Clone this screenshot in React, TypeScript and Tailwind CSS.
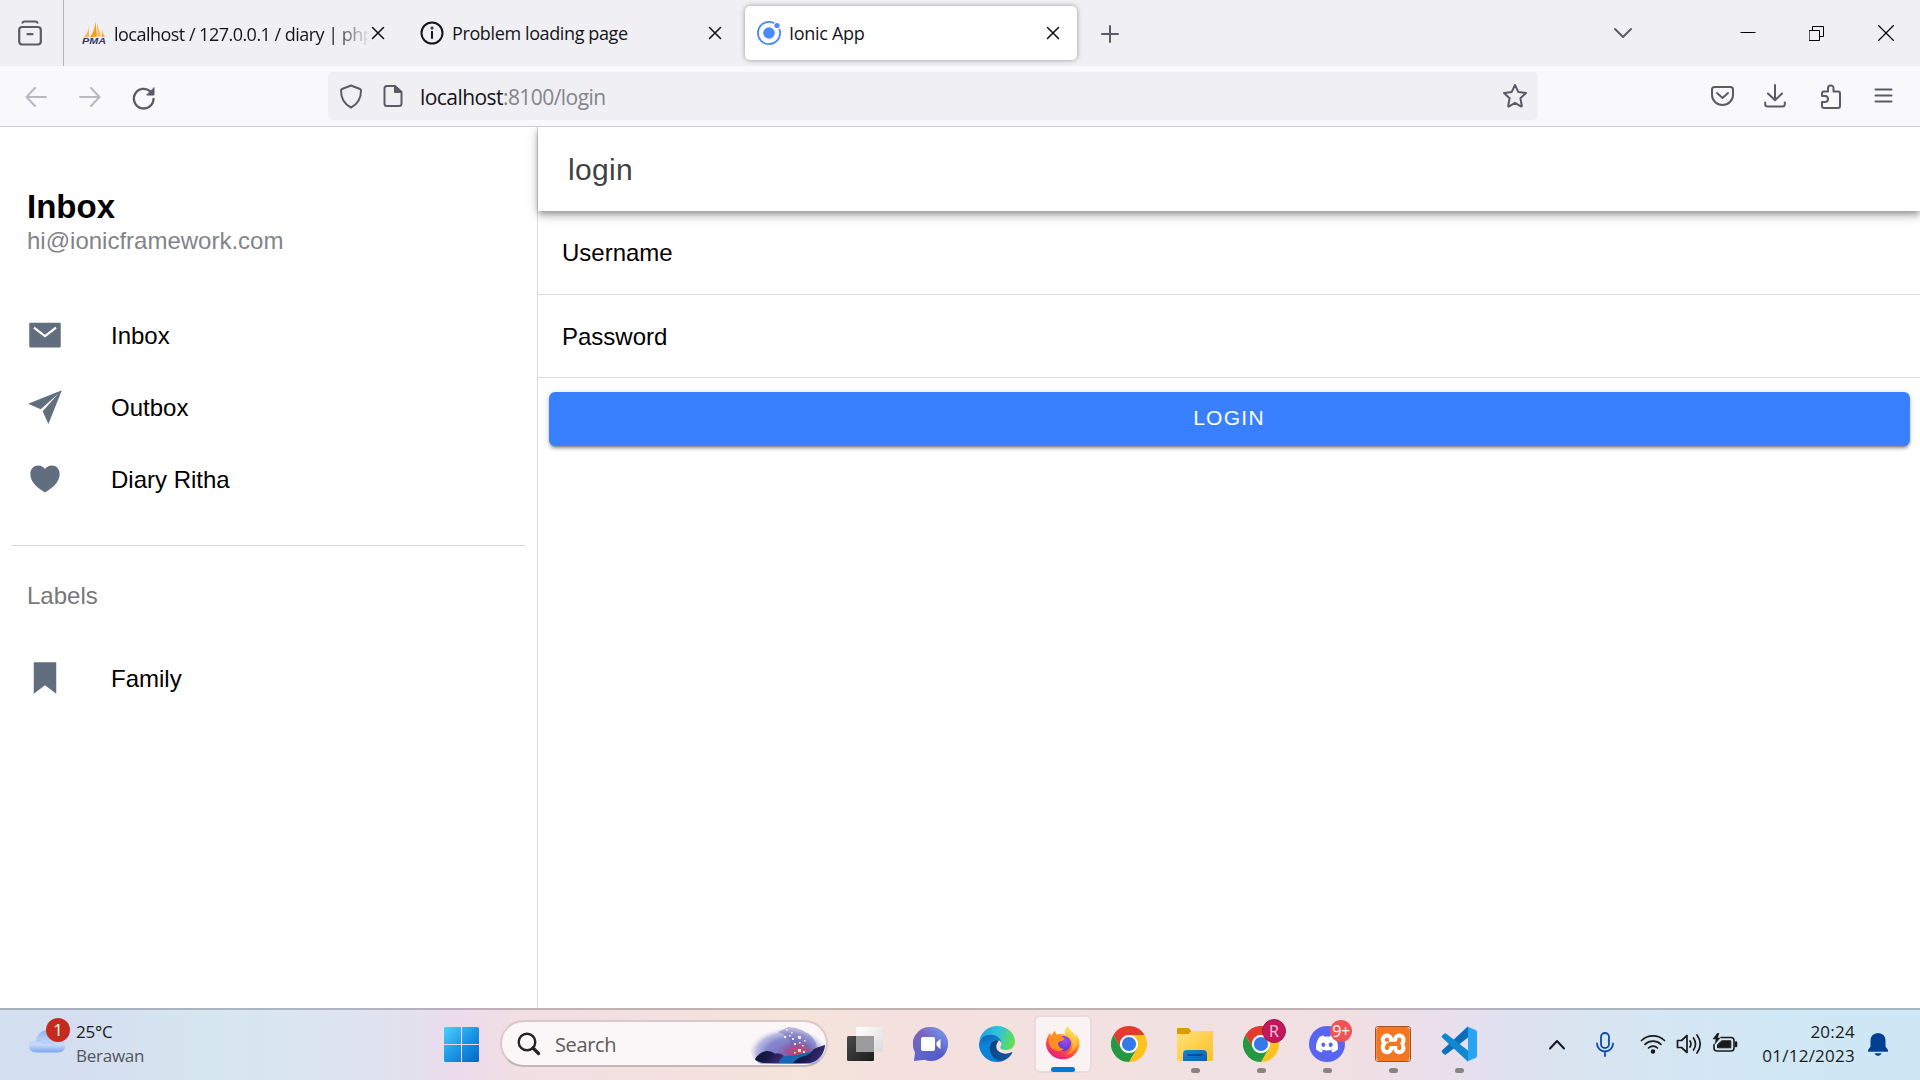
import React from "react";
import { IoMailSharp, IoPaperPlaneSharp, IoHeartSharp, IoBookmarkSharp } from "react-icons/io5";
import { FaDiscord } from "react-icons/fa";
import { SiXampp } from "react-icons/si";

const SEGOE = "font-['Open_Sans','Noto_Sans',sans-serif]";
const ARIAL = "font-['Liberation_Sans',Arial,sans-serif]";

type IconProps = { w: number; h: number; className?: string; children: React.ReactNode; stroke?: string; sw?: number };

function Icon({ w, h, className = "", children, stroke = "#5b5b66", sw = 2 }: IconProps) {
  return (
    <svg
      width={w}
      height={h}
      viewBox={`0 0 ${w} ${h}`}
      fill="none"
      stroke={stroke}
      strokeWidth={sw}
      strokeLinecap="round"
      strokeLinejoin="round"
      className={`shrink-0 ${className}`}
    >
      {children}
    </svg>
  );
}

function TabClose({ className = "" }: { className?: string }) {
  return (
    <Icon w={14} h={14} stroke="#15141a" sw={1.6} className={className}>
      <path d="M1.5 1.5l11 11M12.5 1.5l-11 11" />
    </Icon>
  );
}

function PmaIcon() {
  return (
    <svg width="24" height="24" viewBox="0 0 24 24" className="shrink-0">
      <path d="M7 3.5Q7 11 1.5 16.5L7 16z" fill="#fbb65c" />
      <path d="M13.5 0Q13 10 8 16.5L15 15.5z" fill="#f89c0e" />
      <path d="M15 2Q17.5 10 19 15.5L15.7 16z" fill="#fdb45c" />
      <path d="M20 6.5Q20 12 23 15.5L19.8 16z" fill="#f7a63a" />
      <text x="0" y="23.4" fontSize="9" fontWeight="700" fontStyle="italic" textLength="24" lengthAdjust="spacingAndGlyphs" fill="#37375f" fontFamily="Liberation Sans, sans-serif">PMA</text>
    </svg>
  );
}

function TabStrip() {
  return (
    <div className="flex h-[66px] items-start bg-[#f0f0f4]">
      <div className="flex h-[66px] w-16 items-center border-r border-[#b4b3bb] pl-[18px]">
        <Icon w={24} h={26} sw={2.2}>
          <path d="M4.5 2.7q.5-1.2 2-1.2h11q1.500 0 2 1.200" />
          <rect x="1.200" y="7" width="21.600" height="17.500" rx="3" />
          <path d="M9.500 14.200h5" />
        </Icon>
      </div>
      <div className="flex h-[66px] w-[338px] items-center pl-[18px]">
        <PmaIcon />
        <div className="ml-[8px] w-[257px] pt-[2px] text-[18px] tracking-[-0.52px] whitespace-nowrap text-[#15141a] [mask-image:linear-gradient(to_right,black_219px,transparent_256px)]">
          localhost / 127.0.0.1 / diary | php
        </div>
        <TabClose />
      </div>
      <div className="flex h-[66px] w-[343px] items-center pl-[18px]">
        <Icon w={24} h={24} stroke="#15141a" sw={2}>
          <circle cx="12" cy="12" r="10.500" />
          <path d="M12 10.800v6.200" />
          <circle cx="12" cy="7" r=".5" />
        </Icon>
        <div className="ml-2 w-[255px] pt-px text-[18px] tracking-[-0.38px] whitespace-nowrap text-[#15141a]">Problem loading page</div>
        <TabClose className="ml-px" />
      </div>
      <div className="mt-[6px] flex h-[54px] w-[332px] items-center rounded-[5px] bg-white pl-3 shadow-[0_0_5px_rgba(0,0,0,0.38)]">
        <svg width="24" height="24" viewBox="0 0 24 24" className="shrink-0">
          <circle cx="12" cy="12" r="11.100" fill="none" stroke="#4a8bfc" strokeWidth="1.800" />
          <circle cx="12" cy="12" r="5.800" fill="#4a8bfc" />
          <circle cx="20.200" cy="4.500" r="3.800" fill="#fff" />
          <circle cx="20" cy="4.500" r="2.600" fill="#4a8bfc" />
        </svg>
        <div className="ml-2 w-[256px] pt-px text-[18px] tracking-[-0.3px] text-[#15141a]">Ionic App</div>
        <TabClose className="ml-px" />
      </div>
      <div className="flex h-[66px] flex-1 items-center pl-[24px]">
        <Icon w={18} h={18} className="mt-[2px]"><path d="M9 1v16M1 9h16" /></Icon>
        <Icon w={20} h={12} className="ml-[494px]"><path d="M2 2l8 8 8-8" /></Icon>
        <Icon w={16} h={16} stroke="#000" sw={1} className="ml-[107px]"><path d="M.5 7.500h15" strokeLinecap="butt" /></Icon>
        <Icon w={15} h={15} stroke="#000" sw={1} className="ml-[53px]">
          <path d="M.5 4.500h10v10H.5zM3.500 4V.5h11v10H11" strokeLinejoin="miter" />
        </Icon>
        <Icon w={16} h={16} stroke="#000" sw={1.200} className="ml-[54px]"><path d="M.5.5l15 15M15.500.5l-15 15" /></Icon>
      </div>
    </div>
  );
}

function NavBar() {
  return (
    <div className="flex h-[61px] items-center border-b border-[#cccccf] bg-[#f9f9fb]">
      <Icon w={22} h={20} stroke="#b9b9c0" className="mt-[2px] ml-[25px]"><path d="M21 10H1.500M10 1L1.500 10l8.500 9" /></Icon>
      <Icon w={22} h={20} stroke="#b9b9c0" className="mt-[2px] ml-8"><path d="M1 10h19.500M12 1l8.500 9-8.500 9" /></Icon>
      <Icon w={24} h={24} className="mt-[3px] ml-[31px]" sw={2.300}>
        <path d="M21.500 13a9.800 9.800 0 1 1-3.200-7.600l2 1.800" />
        <path d="M22 2v7h-7z" fill="#5b5b66" strokeWidth="1" />
      </Icon>
      <div className="ml-[172px] flex h-12 w-[1210px] items-center rounded-[5px] bg-[#f0f0f4]">
        <Icon w={22} h={25} className="ml-[12px]"><path d="M11 1.500L20 5q1 .4 1 1.500c0 8-3.500 13.800-10 17C4.500 20.300 1 14.500 1 6.500Q1 5.400 2 5z" /></Icon>
        <Icon w={20} h={22} className="ml-[21px]">
          <path d="M3.500 1H12l6.500 6v11.500q0 2.500-2.500 2.500H4q-2.500 0-2.500-2.500V3.500Q1.500 1 4 1z" />
          <path d="M11.500 1v6.500h7z" fill="#5b5b66" strokeWidth="1" />
        </Icon>
        <div className="ml-[17px] w-[1064px] pt-[4px] text-[21px] tracking-[-0.56px] text-[#15141a]">
          localhost<span className="text-[#84848c]">:8100/login</span>
        </div>
        <Icon w={26} h={26} className="ml-[18px]">
          <path d="M13 2l3.300 6.900 7.700 1-5.600 5.300 1.400 7.500q.1 1-.9.600L13 19.800l-5.900 3.500q-1 .4-.9-.6l1.400-7.500L2 9.900l7.700-1z" />
        </Icon>
      </div>
      <Icon w={23} h={20} className="ml-[173px]">
        <path d="M3.500 1h16q2.500 0 2.500 2.500V9a10.500 10 0 0 1-21 0V3.500Q1 1 3.500 1z" />
        <path d="M6 7l5.500 5L17 7" />
      </Icon>
      <Icon w={22} h={24} className="ml-[30px]"><path d="M11 1v15M4 9.500l7 6.800 7-6.800M1.200 18.500V20q0 2.500 2.500 2.500h14.600q2.500 0 2.500-2.500v-1.500" /></Icon>
      <Icon w={22} h={25} className="ml-[34px]">
        <path d="M2 12V9.500Q2 7.500 4 7.500h4V4q0-2.500 2.800-2.500T13.500 4v3.500H18q2 0 2 2V22q0 2-2 2H4q-2 0-2-2v-4h3q3 0 3-3t-3-3z" />
      </Icon>
      <Icon w={19} h={18} className="ml-[32px]"><path d="M1.500 2.500h16M1.500 8.500h16M1.500 14.500h16" /></Icon>
    </div>
  );
}

function MenuItem({ icon, label }: { icon: React.ReactNode; label: string }) {
  return (
    <div className="flex h-[72px] items-center pl-[27px] text-2xl text-black">
      <span className="text-[36px] text-[#616e7e]">{icon}</span>
      <span className="ml-12 pt-[2px] leading-8">{label}</span>
    </div>
  );
}

function Sidebar() {
  return (
    <aside className="w-[538px] shrink-0 border-r border-[#dcdcdc]">
      <div className="pt-[60px] pl-[27px]">
        <h1 className="text-[33px] leading-[40px] font-bold text-black">Inbox</h1>
        <p className="text-2xl leading-[28px] text-[#838489]">hi@ionicframework.com</p>
      </div>
      <div className="pt-[44px]">
        <MenuItem icon={<IoMailSharp />} label="Inbox" />
        <MenuItem icon={<IoPaperPlaneSharp />} label="Outbox" />
        <MenuItem icon={<IoHeartSharp />} label="Diary Ritha" />
      </div>
      <div className="mx-3 mt-[30px] border-t border-[#d8d8d8]" />
      <div className="pt-[34px] pl-[27px] text-2xl leading-8 text-[#777777]">Labels</div>
      <div className="pt-[30px]">
        <MenuItem icon={<IoBookmarkSharp />} label="Family" />
      </div>
    </aside>
  );
}

function LoginPage() {
  return (
    <main className="flex-1">
      <header className="relative flex h-[84px] items-center bg-white pl-[30px] text-[30px] tracking-[0.3px] text-[#424242] shadow-[0_3px_6px_-1px_rgba(0,0,0,0.3),0_6px_8px_0_rgba(0,0,0,0.14),0_1px_15px_0_rgba(0,0,0,0.12)]">
        login
      </header>
      <div className="flex h-[84px] items-center border-b border-[#dbdbdb] pl-6 text-2xl text-black">Username</div>
      <div className="flex h-[83px] items-center border-b border-[#dbdbdb] pt-[2px] pl-6 text-2xl text-black">Password</div>
      <button className="mt-[14px] ml-[11px] flex h-[54px] w-[1361px] items-center justify-center rounded-[6px] bg-[#3880ff] pr-px pb-[2px] text-[21px] tracking-[1.260px] text-white shadow-[0_4px_2px_-3px_rgba(0,0,0,0.3),0_3px_3px_0_rgba(0,0,0,0.2),0_1px_7px_0_rgba(0,0,0,0.14)]">
        LOGIN
      </button>
    </main>
  );
}

function WindowsLogo() {
  return (
    <svg width="36" height="36" viewBox="0 0 36 36" className="shrink-0">
      <defs>
        <linearGradient id="win" x1="0" y1="0" x2="1" y2="1" gradientUnits="objectBoundingBox">
          <stop offset="0" stopColor="#4dd2ff" />
          <stop offset=".5" stopColor="#1b97e6" />
          <stop offset="1" stopColor="#0067c8" />
        </linearGradient>
      </defs>
      <path d="M1.500 0H17v17H0V1.500Q0 0 1.500 0zM18 0h15.500Q35 0 35 1.500V17H18zM0 18h17v17H1.500Q0 35 0 33.500zM18 18h17v15.500q0 1.500-1.500 1.500H18z" fill="url(#win)" />
    </svg>
  );
}

function SearchArt() {
  return (
    <svg width="76" height="40" viewBox="0 0 76 40" className="shrink-0">
      <defs>
        <radialGradient id="sky" cx=".5" cy=".6" r=".52">
          <stop offset="0" stopColor="#8067b8" />
          <stop offset=".55" stopColor="#8488cf" />
          <stop offset=".8" stopColor="#a9abdc" stopOpacity=".8" />
          <stop offset="1" stopColor="#e5dff0" stopOpacity="0" />
        </radialGradient>
        <radialGradient id="glow">
          <stop offset="0" stopColor="#d3405a" />
          <stop offset=".5" stopColor="#a84c85" stopOpacity=".8" />
          <stop offset="1" stopColor="#7a62b4" stopOpacity="0" />
        </radialGradient>
        <linearGradient id="hill" x1="0" x2="1" y1="0" y2=".3">
          <stop offset="0" stopColor="#0b0f2b" />
          <stop offset=".6" stopColor="#1d1b52" />
          <stop offset="1" stopColor="#3a2c70" />
        </linearGradient>
      </defs>
      <ellipse cx="38" cy="24" rx="38" ry="24" fill="url(#sky)" />
      <path d="M28 8q12 3 13 14l3 10h22q3-10-3-18Q54 4 38 3z" fill="#565bb0" opacity=".4" />
      <ellipse cx="48" cy="29" rx="20" ry="14" fill="url(#glow)" />
      <path d="M5 36q6-7 14-8 8 1 13 4l14-1 14-3q7-5 15-7-1 9-7 14-4 4-12 4H14q-5 0-9-3z" fill="#1668b3" />
      <path d="M5 35q4-7 12-8 5 0 8 3 5-2 9 2-5 4-5 7H14q-6-1-9-4z" fill="url(#hill)" />
      <path d="M43 39q5-6 12-7 6-2 9-7 5-2 11-4-1 9-7 14-4 4-12 4z" fill="url(#hill)" />
      <g fill="#ffe5c0">
        <path d="M26 6h1.600v1.600H26zM31 4h1.600v1.600H31zM36 5h1.600v1.600H36zM34 12h2v2h-2zM41 8h1.600v1.600H41zM42 14h2v2h-2zM48 12h3v3h-3zM44 19h2v2h-2zM49 18h1.600v1.600H49zM54 16h1.600v1.600H54zM52 21h1.600v1.600H52zM48 25h3v3h-3zM53 27h2v2h-2zM44 28h1.600v1.600H44zM39 11h1.600v1.600H39z" />
      </g>
    </svg>
  );
}

function ChromeLogo() {
  return (
    <svg width="36" height="36" viewBox="0 0 36 36" className="shrink-0">
      <path d="M2.400 9A18 18 0 0 1 33.600 9H18a9 9 0 0 0-7.800 13.500z" fill="#e33b2e" />
      <path d="M33.600 9A18 18 0 0 1 18 36l7.800-13.500A9 9 0 0 0 18 9z" fill="#fcc31e" />
      <path d="M2.400 9l7.800 13.500a9 9 0 0 0 15.600 0L18 36A18 18 0 0 1 2.400 9z" fill="#259843" />
      <circle cx="18" cy="18" r="9" fill="#fff" />
      <circle cx="18" cy="18" r="7.100" fill="#3479ea" />
    </svg>
  );
}

function TaskViewIcon() {
  return (
    <svg width="36" height="36" viewBox="0 0 36 36" className="shrink-0">
      <defs>
        <linearGradient id="tv1" x1="0" y1="0" x2="1" y2="1"><stop stopColor="#4b4b4b" /><stop offset="1" stopColor="#1c1c1c" /></linearGradient>
        <linearGradient id="tv2" x1="0" y1="0" x2="1" y2="1"><stop stopColor="#fff" /><stop offset="1" stopColor="#dadada" /></linearGradient>
      </defs>
      <rect x="9" y="1" width="27" height="25" rx="1.500" fill="url(#tv2)" />
      <rect x="0" y="10" width="27" height="25" rx="1.500" fill="url(#tv1)" />
      <path d="M9 10h18v16H9z" fill="#9b9b9b" />
    </svg>
  );
}

function ChatIcon() {
  return (
    <svg width="36" height="36" viewBox="0 0 36 36" className="shrink-0">
      <defs>
        <linearGradient id="chat" x1="0" y1="0" x2=".8" y2="1"><stop stopColor="#8b5fae" /><stop offset=".5" stopColor="#6367c7" /><stop offset="1" stopColor="#5059c9" /></linearGradient>
        <linearGradient id="chat2" x1="0" y1="1" x2="1" y2="0"><stop offset=".5" stopColor="#7b9bf0" stopOpacity="0" /><stop offset="1" stopColor="#7fa2f5" /></linearGradient>
      </defs>
      <path d="M18 1a17 17 0 1 1-6.500 32.700L1 35l1-8.800A17 17 0 0 1 18 1z" fill="url(#chat)" />
      <path d="M18 1a17 17 0 1 1-6.500 32.700L1 35l1-8.800A17 17 0 0 1 18 1z" fill="url(#chat2)" />
      <rect x="8" y="11" width="14" height="14" rx="2" fill="#fff" />
      <path d="M23.500 16.500l4-3.800v10.600l-4-3.800z" fill="#fff" />
    </svg>
  );
}

function EdgeLogo() {
  return (
    <svg width="36" height="36" viewBox="0 0 36 36" className="shrink-0">
      <defs>
        <linearGradient id="eg1" x1="0" y1=".3" x2="1" y2=".5"><stop stopColor="#1d9fe0" /><stop offset=".5" stopColor="#30c2dc" /><stop offset="1" stopColor="#62e04c" /></linearGradient>
        <linearGradient id="eg2" x1=".2" y1="0" x2=".5" y2="1"><stop stopColor="#1464ae" /><stop offset=".4" stopColor="#0a84dc" /><stop offset="1" stopColor="#0c80d8" /></linearGradient>
        <linearGradient id="eg3" x1="0" y1="0" x2="1" y2="1"><stop stopColor="#0d3f80" /><stop offset="1" stopColor="#1159a8" /></linearGradient>
      </defs>
      <path d="M.2 16A18 18 0 0 1 18 0c10 0 18 7 18 15.500 0 5.500-4 8.500-8.500 8.500-4 0-6.300-1.300-6.300-2.600 0-1 1.300-1.500 1.300-4C22.500 13 18 9.500 12.500 9.500 6 9.500 1.500 12.500.2 16z" fill="url(#eg1)" />
      <path d="M0 18C1 12 6 8.800 12 8.800c6 0 10.300 3.700 10.500 8.200-1-2-3-3.200-5.500-3-4 .5-6 4.500-5.500 9 .6 6 5 10.500 10.500 12.500-2 .4-3 .5-4 .5A18 18 0 0 1 0 18z" fill="url(#eg2)" />
      <path d="M17 14c-3.500.6-6.500 4-6.200 9C11.200 30 17 35 22.500 35.400c5-1.400 9-4.700 11-8.900q-.2-.8-1-.3c-3 1.500-6.500 1.900-9.500.8-4-1.300-6-4-5.700-7 .1-2.300 1.700-4 2.500-5.300Q18.500 13.800 17 14z" fill="url(#eg3)" />
    </svg>
  );
}

function FirefoxLogo() {
  return (
    <svg width="36" height="36" viewBox="0 0 36 36" className="shrink-0">
      <defs>
        <linearGradient id="ff1" x1=".8" y1="0" x2=".25" y2="1"><stop stopColor="#fff44f" /><stop offset=".35" stopColor="#ffab27" /><stop offset=".6" stopColor="#ff5634" /><stop offset="1" stopColor="#e8128a" /></linearGradient>
        <linearGradient id="ff2" x1=".7" y1="0" x2=".4" y2="1"><stop stopColor="#fff36b" /><stop offset="1" stopColor="#ff8a1e" /></linearGradient>
        <radialGradient id="ff3" cx=".6" cy=".3" r=".7"><stop stopColor="#a04cf0" /><stop offset="1" stopColor="#5b38c4" /></radialGradient>
      </defs>
      <path d="M23 0q.5 3.500 3.500 5.500 3 2.200 4 5.500.3-2 0-3.500c3 3.500 4.300 7.500 4 12A17 17 0 0 1 1 19c0-5 1.500-9 4-12q.3 2 1.500 3 1-3 3.500-5 0 2 1.500 3.800 4.500-2 9 .2Q19.500 3.500 23 0z" fill="url(#ff1)" />
      <path d="M23 0q.5 3.500 3.500 5.500c5 4 6.500 9.500 4.500 15-2 5-6 8-11 8q8-3 7.500-10.500Q27 12 21 9 18.500 4 23 0z" fill="url(#ff2)" />
      <circle cx="18.500" cy="17.500" r="7.600" fill="url(#ff3)" />
      <path d="M5 7q.3 2 1.500 3 1-3 3.500-5 0 2.500 2 4 4 .2 7.500 4-1.500 2-5 2.500-1.500 1-1.500 2.500 1 4.500 6 5-3 3-8 1.500Q4 22 3.500 15 3.300 10 5 7z" fill="#ff8f25" />
    </svg>
  );
}

function FolderIcon() {
  return (
    <svg width="36" height="36" viewBox="0 0 36 36" className="shrink-0">
      <defs>
        <linearGradient id="fd" x1="0" y1="0" x2="1" y2="1"><stop stopColor="#ffe27a" /><stop offset="1" stopColor="#fdbf23" /></linearGradient>
        <linearGradient id="fd2" x1="0" y1="0" x2="1" y2="1"><stop stopColor="#1286d8" /><stop offset="1" stopColor="#0663b4" /></linearGradient>
      </defs>
      <path d="M1 2h10.500L15 5.500 11.500 9H0V3q0-1 1-1z" fill="#dc9a06" />
      <path d="M0 8h11.500L14.500 5H35q1 0 1 1v27q0 2-2 2H2q-2 0-2-2z" fill="url(#fd)" />
      <path d="M6 35v-7q0-4 4-4h16q4 0 4 4v7z" fill="url(#fd2)" />
      <path d="M11 29h14" stroke="#05427f" strokeWidth="1.500" strokeLinecap="round" />
    </svg>
  );
}

function VsCodeLogo() {
  return (
    <svg width="36" height="36" viewBox="0 0 36 36" className="shrink-0">
      <path d="M27 .3L1 24.500q-.8 1 0 1.800l2 2q1 .8 2 .1L27 11.500z" fill="#0a6fb8" />
      <path d="M27 35.700L1 11.500q-.8-1 0-1.800l2-2q1-.8 2-.1L27 24.500z" fill="#1088d0" />
      <path d="M26 .4L34.500 4Q36 4.800 36 6v24q0 1.200-1.500 2L26 35.600q1-.6 1-2V2.400q0-1.400-1-2z" fill="#27a5f2" />
    </svg>
  );
}

function DockItem({ children, running = false, badge }: { children: React.ReactNode; running?: boolean; badge?: React.ReactNode }) {
  return (
    <div className="relative flex h-[70px] w-[66px] flex-col items-center pt-4">
      {children}
      {badge}
      {running && <div className="mt-[6px] h-[5px] w-[9px] rounded-full bg-[#8a8383]" />}
    </div>
  );
}

function Taskbar() {
  return (
    <div className="flex h-[72px] items-start border-t-2 border-black/20 bg-[linear-gradient(to_right,#d3e0ef_0px,#d4def0_75px,#d6e6ef_210px,#dce4ef_340px,#e3e0ee_410px,#ecdbed_460px,#f1dfe3_520px,#f3e0df_680px,#f4e4da_800px,#f4e1de_880px,#f2e1e1_1150px,#f1e0e3_1340px,#ebdfea_1430px,#e0e0f0_1500px,#dae4f0_1560px,#d5e6f3_1680px,#cfe8f4_1800px,#cfe6f4_1920px)] bg-origin-border">
      <div className="flex h-[70px] w-[444px] items-start pt-[8px] pl-[29px]">
        <div className="relative h-[40px] w-[47px]">
          <svg width="37" height="24" viewBox="0 0 37 24" className="mt-[11px]">
            <defs>
              <linearGradient id="cl" x1="0" y1="0" x2="0" y2="1"><stop stopColor="#92b5ee" /><stop offset=".65" stopColor="#c8dafa" /><stop offset="1" stopColor="#7ba5ec" /></linearGradient>
            </defs>
            <path d="M7 12Q8 2 18 1q9 0 11 9 7 .5 7 7 0 6-7 6.500H8Q0 23 0 17q0-5 7-5z" fill="url(#cl)" />
            <path d="M7 11q5-.5 8 3 8-2 10 3" fill="none" stroke="#a9c5f4" />
          </svg>
          <div className="absolute top-0 left-[17px] flex size-6 items-center justify-center rounded-full bg-[#c42b1c] text-[17px] text-white">1</div>
        </div>
        <div className="mt-[2px] text-[17px] leading-6 tracking-[-0.25px] text-[#1b1b1b]">
          <div>25°C</div>
          <div className="text-[#53565c]">Berawan</div>
        </div>
      </div>
      <div className="pt-[17px]"><WindowsLogo /></div>
      <div className="mt-[10px] ml-[20px] flex h-[47px] w-[328px] items-center rounded-full border-2 border-[#d9c9cb] border-b-[#c4b5b6] bg-[#fbf6f7] pl-[15px]">
        <Icon w={24} h={24} stroke="#242424" sw={2.400}>
          <circle cx="10" cy="10" r="8.300" />
          <path d="M16 16l5.500 5.500" strokeWidth="3.200" />
        </Icon>
        <div className="ml-[14px] w-[195px] pt-[3px] text-[20px] tracking-[-0.35px] text-[#5c5a5b]">Search</div>
        <SearchArt />
      </div>
      <div className="ml-[4px] flex">
        <DockItem><TaskViewIcon /></DockItem>
        <DockItem><ChatIcon /></DockItem>
        <DockItem><EdgeLogo /></DockItem>
        <div className="h-[70px] w-[66px] px-[4px] pt-[5px]">
          <div className="flex h-[58px] flex-col items-center rounded-[6px] border-2 border-[#e9dadb] bg-[#faf2f3] pt-[9px]">
            <FirefoxLogo />
            <div className="mt-[5px] h-[5px] w-6 shrink-0 rounded-full bg-[#0078d4]" />
          </div>
        </div>
        <DockItem><ChromeLogo /></DockItem>
        <DockItem running><FolderIcon /></DockItem>
        <DockItem running badge={<div className="absolute top-[9px] left-[34px] flex size-6 items-center justify-center rounded-full border border-[#9a184a] bg-[#c2185b] text-[16px] text-[#f5cadb]">R</div>}><ChromeLogo /></DockItem>
        <DockItem running badge={<div className="absolute top-[10px] left-[36px] flex size-[22px] items-center justify-center rounded-full bg-[#ee5555] text-[16px] font-medium tracking-[-0.5px] text-white">9+</div>}>
          <div className="flex size-9 shrink-0 items-center justify-center rounded-full bg-[#5865f2] text-[24px] text-white"><FaDiscord /></div>
        </DockItem>
        <DockItem running>
          <div className="flex size-9 shrink-0 items-center justify-center rounded-[3px] border border-[#a35222] bg-white text-[34px] text-[#f37623]"><SiXampp className="shrink-0" /></div>
        </DockItem>
        <DockItem running><VsCodeLogo /></DockItem>
      </div>
      <div className="flex h-[70px] items-center pb-[2px] pl-[56px]">
        <Icon w={18} h={11} stroke="#1b1b1b"><path d="M2 9.500l7-7.500 7 7.500" /></Icon>
        <Icon w={18} h={25} stroke="#0a4ca8" sw={1.800} className="ml-[30px]">
          <rect x="5" y="1" width="8" height="15" rx="4" />
          <path d="M1 11.500a8 8 0 0 0 16 0M9 19.500V24" />
        </Icon>
        <Icon w={26} h={20} stroke="#1b1b1b" sw={1.700} className="ml-[26px]">
          <path d="M1.500 6.500a16.500 16.500 0 0 1 23 0M5 10.300a11.500 11.500 0 0 1 16 0M8.500 14a6.500 6.500 0 0 1 9 0" />
          <circle cx="13" cy="17.500" r="1.400" fill="#1b1b1b" />
        </Icon>
        <Icon w={26} h={22} stroke="#1b1b1b" sw={1.700} className="ml-[10px]">
          <path d="M1.500 7.500h4L11 2.500v17l-5.500-5h-4zM14 8q2 3 0 6M17.500 5q4 6 0 12M21 2q6.500 9 0 18" />
        </Icon>
        <Icon w={26} h={22} stroke="#1b1b1b" sw={1.600} className="ml-[10px]">
          <path d="M9 4.500h10q3 0 3 3v7.500q0 3-3 3H5q-3 0-3-3v-3.500" />
          <path d="M10 7.800h8.800v7H5.500V12z" fill="#1b1b1b" strokeWidth="1" />
          <path d="M24 9.500v3.500" strokeWidth="2.500" />
          <path d="M5.500 0L1 6h3L3 11l5-6H5.500l1.500-5z" fill="#1b1b1b" strokeWidth=".5" />
        </Icon>
      </div>
      <div className="flex h-[70px] flex-1 items-start justify-end pt-[10px] pr-[32px]">
        <div className="text-right text-[17px] leading-6 tracking-[0.25px] text-[#1b1b1b]">
          <div>20:24</div>
          <div>01/12/2023</div>
        </div>
        <svg width="20" height="24" viewBox="0 0 20 24" className="mt-[13px] ml-[13px] shrink-0" fill="#003f93">
          <path d="M10 0q7.500.5 7.500 8v5.500L20 17q.4 1.800-1 1.800H1q-1.400 0-1-1.800l2.500-3.500V8Q2.500.5 10 0zM6.500 20.300h7q-.8 2.700-3.500 2.700t-3.500-2.700z" />
        </svg>
      </div>
    </div>
  );
}

export default function App() {
  return (
    <div className={`flex h-[1080px] w-[1920px] flex-col overflow-hidden bg-white ${SEGOE}`}>
      <TabStrip />
      <NavBar />
      <div className={`flex min-h-0 flex-1 overflow-hidden ${ARIAL}`}>
        <Sidebar />
        <LoginPage />
      </div>
      <Taskbar />
    </div>
  );
}
